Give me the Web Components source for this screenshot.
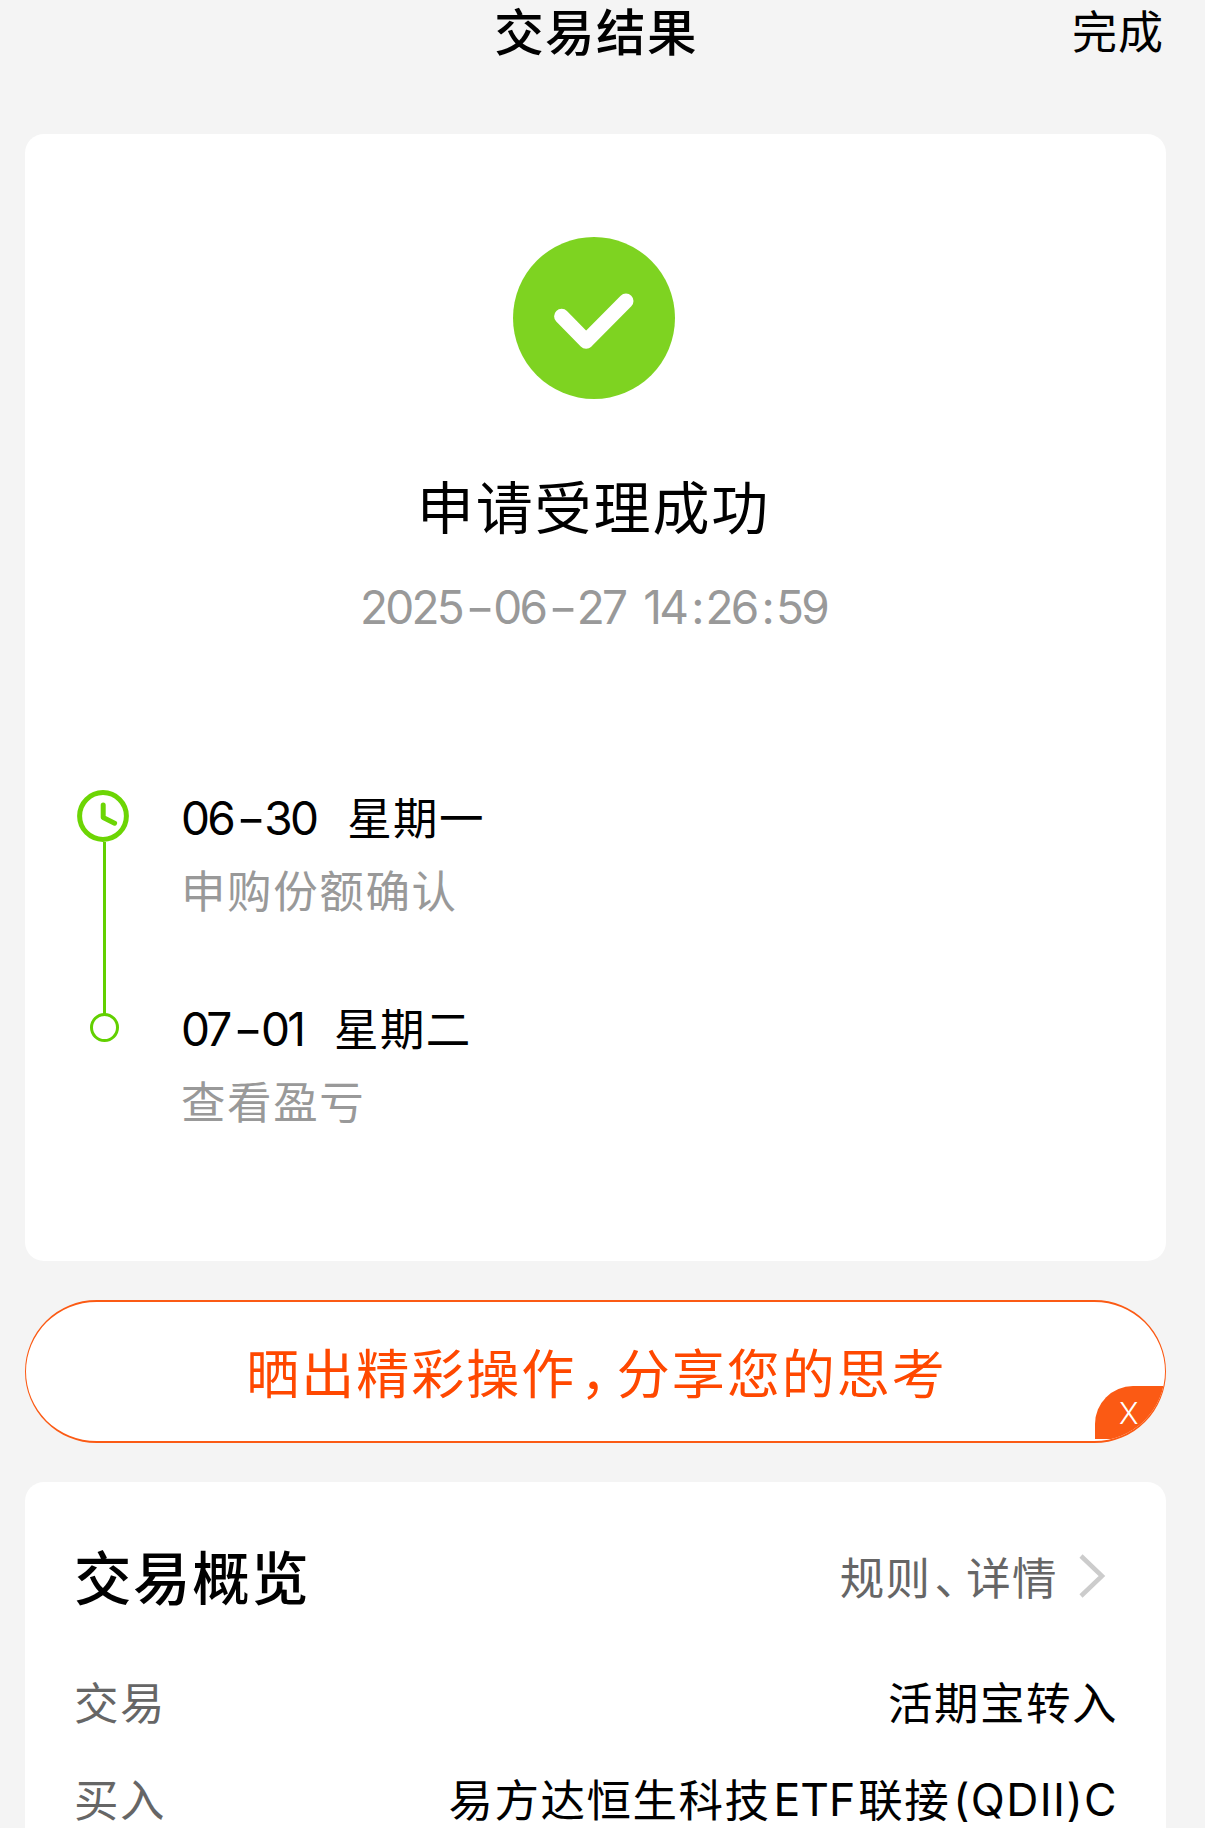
<!DOCTYPE html>
<html lang="zh-CN">
<head>
<meta charset="UTF-8">
<title>交易结果</title>
<style>
    html {
        background: #f4f4f4;
    }

    body {
        margin: 0;
        height: 1828px;
        overflow: hidden;
        color: #000;
        font-family: 'Inter', 'Noto Sans CJK SC', sans-serif;
    }
</style>
</head>
<body>
<trade-page>
    <page-header slot="header" action="完成">交易结果</page-header>

    <white-card class="result">
        <result-status time="2025-06-27 14:26:59">申请受理成功</result-status>
        <time-line>
            <time-step icon="clock" date="06-30" day="星期一">申购份额确认</time-step>
            <time-step icon="dot" date="07-01" day="星期二">查看盈亏</time-step>
        </time-line>
    </white-card>

    <share-button>晒出精彩操作<half-mark style="--before: 4px; --after: 8px">，</half-mark>分享您的思考</share-button>

    <white-card class="overview">
        <card-title>
            交易概览
            <span slot="more">规则<half-mark style="--before: 3px; --after: 8px">、</half-mark>详情</span>
        </card-title>
        <info-row label="交易">活期宝转入</info-row>
        <info-row label="买入">易方达恒生科技<latin-text style="--track: 0; --after: 3px">ETF</latin-text>联接<latin-text style="--track: 1.4px">(QDII)C</latin-text></info-row>
    </white-card>
</trade-page>

<script>
// Small helper: attach an open shadow root with the given markup
function render(el, html) {
    el.attachShadow({ mode: 'open' }).innerHTML = html;
}

// Wrap hyphens and colons so they can be given more room than the font has
function spaceMarks(text) {
    return text
        .replace(/:/g, '<span class="colon">:</span>')
        .replace(/-/g, '<span class="hyphen">-</span>');
}

const digitStyles = `
    .digits {
        font-size: 46px;
        letter-spacing: -2.8px;
        word-spacing: 8px;
    }

    .hyphen {
        display: inline-block;
        transform: scaleX(1.4);
        margin: 0 6px 0 7px;
    }

    .colon {
        margin: 0 4px 0 5px;
    }
`;

class TradePage extends HTMLElement {
    constructor() {
        super();
        render(this, `
            <style>
                :host {
                    display: flex;
                    flex-direction: column;
                    height: 1828px;
                }

                main {
                    flex: 1;
                    display: flex;
                    flex-direction: column;
                    padding: 0 39px 0 25px;
                }

                ::slotted(.result) { height: 1127px; }
                ::slotted(share-button) { margin: 39px 0; }
                ::slotted(.overview) { height: 400px; }
            </style>
            <slot name="header"></slot>
            <main><slot></slot></main>
        `);
    }
}

class PageHeader extends HTMLElement {
    constructor() {
        super();
        render(this, `
            <style>
                :host {
                    display: grid;
                    flex: none;
                    grid-template-columns: 1fr auto 1fr;
                    align-items: center;
                    height: 65px;
                    margin-bottom: 69px;
                    padding: 0 41px 0 28px;
                    line-height: 60px;
                }

                .title {
                    grid-column: 2;
                    font-size: 49.5px;
                    font-weight: 500;
                    letter-spacing: 1.4px;
                }

                .action {
                    justify-self: end;
                    font-size: 45px;
                    letter-spacing: 1px;
                }
            </style>
            <div class="title"><slot></slot></div>
            <div class="action">${this.getAttribute('action')}</div>
        `);
    }
}

class WhiteCard extends HTMLElement {
    constructor() {
        super();
        render(this, `
            <style>
                :host {
                    display: block;
                    flex: none;
                    box-sizing: border-box;
                    background: #fff;
                    border-radius: 19px;
                    padding: 0 48px;
                }
            </style>
            <slot></slot>
        `);
    }
}

class ResultStatus extends HTMLElement {
    constructor() {
        super();
        render(this, `
            <style>
                :host {
                    display: flex;
                    flex-direction: column;
                    align-items: center;
                    padding: 103px 4px 153px 0;
                }

                svg {
                    display: block;
                    width: 162px;
                    height: 162px;
                }

                .title {
                    margin-top: 70px;
                    font-size: 57px;
                    line-height: 80px;
                    letter-spacing: 1.9px;
                }

                .time {
                    margin-top: 28px;
                    color: #999;
                    line-height: 60px;
                }

                ${digitStyles}
            </style>
            <svg viewBox="0 0 162 162">
                <circle cx="81" cy="81" r="81" fill="#7ed321"/>
                <path d="M48.6 79.3 73.1 104.3 113 64" fill="none" stroke="#fff" stroke-width="15" stroke-linecap="round" stroke-linejoin="round"/>
            </svg>
            <div class="title"><slot></slot></div>
            <div class="time digits">${spaceMarks(this.getAttribute('time'))}</div>
        `);
    }
}

class TimeLine extends HTMLElement {
    constructor() {
        super();
        render(this, `
            <style>
                :host {
                    display: flex;
                    flex-direction: column;
                    padding-left: 4px;
                }
            </style>
            <slot></slot>
        `);
    }
}

class TimeStep extends HTMLElement {
    constructor() {
        super();
        const clock = `
            <svg class="clock" width="52" height="52" viewBox="0 0 52 52" fill="none" stroke="#6cd504" stroke-width="5">
                <circle cx="26" cy="26" r="23.4"/>
                <path d="M26.2 15v12.6l11.4 5.6" stroke-linecap="round" stroke-linejoin="round"/>
            </svg>
            <div class="line"></div>`;
        const dot = `
            <div class="line short"></div>
            <div class="dot"></div>`;
        const isClock = this.getAttribute('icon') === 'clock';
        render(this, `
            <style>
                :host {
                    display: flex;
                    gap: 50px;
                    height: ${isClock ? 211 : 128}px;
                }

                .rail {
                    display: flex;
                    flex-direction: column;
                    align-items: center;
                    width: 54px;
                }

                .clock {
                    flex: none;
                    margin-right: 3px;
                }

                .line {
                    flex: 1;
                    width: 3px;
                    background: #62d000;
                }

                .line.short {
                    flex: none;
                    height: 13px;
                }

                .dot {
                    box-sizing: border-box;
                    width: 29px;
                    height: 29px;
                    margin-top: -1px;
                    border: 3px solid #62d000;
                    border-radius: 50%;
                }

                .when {
                    display: flex;
                    gap: 31px;
                    font-size: 44.5px;
                    line-height: 56px;
                    letter-spacing: 1.4px;
                }

                .day {
                    padding-top: 1px;
                }

                .what {
                    margin-top: 17px;
                    color: #999;
                    font-size: 44.5px;
                    line-height: 56px;
                    letter-spacing: 1.6px;
                }

                ${digitStyles}
            </style>
            <div class="rail">${isClock ? clock : dot}</div>
            <div>
                <div class="when">
                    <span class="digits">${spaceMarks(this.getAttribute('date'))}</span>
                    <span class="day">${this.getAttribute('day')}</span>
                </div>
                <div class="what"><slot></slot></div>
            </div>
        `);
    }
}

class ShareButton extends HTMLElement {
    constructor() {
        super();
        render(this, `
            <style>
                :host {
                    position: relative;
                    display: flex;
                    flex: none;
                    align-items: center;
                    justify-content: center;
                    box-sizing: border-box;
                    height: 143px;
                    border: solid #fb5a14;
                    border-width: 2px 1.5px;
                    border-radius: 72px;
                    background: #fff;
                    overflow: hidden;
                    color: #ff4800;
                    font-size: 53px;
                    line-height: 70px;
                    letter-spacing: 2px;
                }

                .text {
                    padding: 7px 0 0 2px;
                }

                /* Close badge, cut off by the rounded corner */
                .close {
                    position: absolute;
                    right: 0;
                    bottom: 2px;
                    box-sizing: border-box;
                    width: 70px;
                    height: 53px;
                    padding-left: 24px;
                    border-top-left-radius: 38px;
                    background: #fb5a14;
                    color: #fff;
                    font-size: 29.5px;
                    font-weight: 300;
                    line-height: 55px;
                    letter-spacing: 0;
                }
            </style>
            <div class="text"><slot></slot></div>
            <div class="close">X</div>
        `);
    }
}

class CardTitle extends HTMLElement {
    constructor() {
        super();
        render(this, `
            <style>
                :host {
                    display: flex;
                    align-items: center;
                    justify-content: space-between;
                    padding: 57px 12px 45px 1px;
                    line-height: 80px;
                }

                .title {
                    font-size: 57.5px;
                    font-weight: 500;
                    letter-spacing: 1.6px;
                }

                .more {
                    display: flex;
                    align-items: center;
                    gap: 21px;
                    color: #666;
                    font-size: 44.5px;
                    letter-spacing: 1.4px;
                }

                svg {
                    margin-bottom: 7px;
                }
            </style>
            <div class="title"><slot></slot></div>
            <div class="more">
                <slot name="more"></slot>
                <svg width="27" height="44" viewBox="0 0 27 44" fill="none" stroke="#ccc" stroke-width="4.5">
                    <path d="M2 2 23 22 2 42"/>
                </svg>
            </div>
        `);
    }
}

class InfoRow extends HTMLElement {
    constructor() {
        super();
        render(this, `
            <style>
                :host {
                    display: flex;
                    justify-content: space-between;
                    height: 97px;
                    line-height: 80px;
                    font-size: 44.5px;
                    letter-spacing: 1.5px;
                }

                .label {
                    padding-left: 1px;
                    color: #666;
                }
            </style>
            <span class="label">${this.getAttribute('label')}</span>
            <span><slot></slot></span>
        `);
    }
}

// Latin run inside Chinese text, with its own tracking
class LatinText extends HTMLElement {
    constructor() {
        super();
        render(this, `
            <style>
                :host {
                    display: inline-block;
                    margin: 0 var(--after, 0) 0 3px;
                    letter-spacing: var(--track);
                    transform: translateY(-1px);
                }
            </style>
            <slot></slot>
        `);
    }
}

// Full-width punctuation set on a half-width body
class HalfMark extends HTMLElement {
    constructor() {
        super();
        render(this, `
            <style>
                :host {
                    display: inline-block;
                    margin: 0 var(--after) 0 var(--before);
                    font-feature-settings: 'halt';
                }
            </style>
            <slot></slot>
        `);
    }
}

customElements.define('trade-page', TradePage);
customElements.define('page-header', PageHeader);
customElements.define('white-card', WhiteCard);
customElements.define('result-status', ResultStatus);
customElements.define('time-line', TimeLine);
customElements.define('time-step', TimeStep);
customElements.define('share-button', ShareButton);
customElements.define('card-title', CardTitle);
customElements.define('info-row', InfoRow);
customElements.define('latin-text', LatinText);
customElements.define('half-mark', HalfMark);
</script>
</body>
</html>
